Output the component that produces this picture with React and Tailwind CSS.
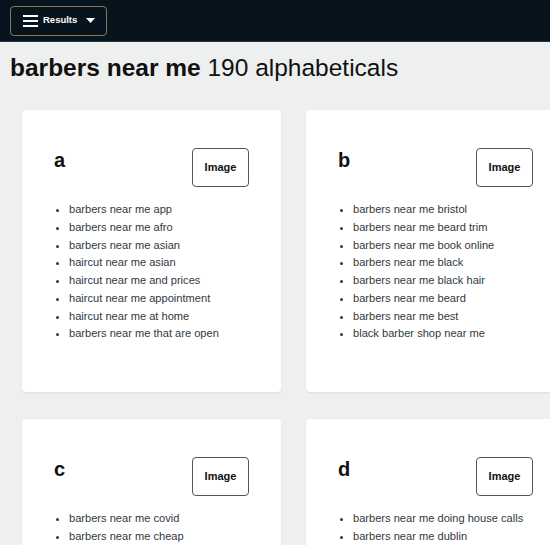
const cards = [
  {
    letter: "a",
    items: [
      "barbers near me app",
      "barbers near me afro",
      "barbers near me asian",
      "haircut near me asian",
      "haircut near me and prices",
      "haircut near me appointment",
      "haircut near me at home",
      "barbers near me that are open",
    ],
  },
  {
    letter: "b",
    items: [
      "barbers near me bristol",
      "barbers near me beard trim",
      "barbers near me book online",
      "barbers near me black",
      "barbers near me black hair",
      "barbers near me beard",
      "barbers near me best",
      "black barber shop near me",
    ],
  },
  {
    letter: "c",
    items: [
      "barbers near me covid",
      "barbers near me cheap",
      "barbers near me cardiff",
      "barbers near me curly hair",
      "barbers near me children",
      "haircut near me cheap",
      "haircut near me curly hair",
      "cheap barbers near me",
    ],
  },
  {
    letter: "d",
    items: [
      "barbers near me doing house calls",
      "barbers near me dublin",
      "barbers near me dundee",
      "barbers near me dreads",
      "haircut near me drop in",
      "haircut near me deals",
      "haircut near me discount",
      "dog barbers near me",
    ],
  },
];

function Card({ letter, items }) {
  return (
    <div className="h-[282px] w-[259px] shrink-0 rounded bg-white px-[32px] pt-[38px] shadow-[0_1px_2px_rgba(0,0,0,0.08)]">
      <div className="flex items-start justify-between">
        <h2 className="mt-[2px] text-[20px] font-bold leading-none text-[#111]">{letter}</h2>
        <button className="h-[39px] w-[57px] rounded border border-[#555] bg-white text-[11px] font-bold text-[#111]">
          Image
        </button>
      </div>
      <ul className="mt-[14px] list-disc pl-[15px] text-[11.1px] leading-[17.75px] text-[#30393f]">
        {items.map((item) => (
          <li key={item}>{item}</li>
        ))}
      </ul>
    </div>
  );
}

export default function App() {
  return (
    <div className="h-[545px] w-[550px] overflow-hidden bg-[#eeefef] font-['Liberation_Sans',Arial,sans-serif]">
      {/* top bar */}
      <header className="flex h-[42px] items-center border-b border-[#2a3640] bg-[#07141e] pl-[10px]">
        <button className="flex h-[30px] w-[97px] items-center gap-[5px] rounded border border-[#8a7657] pl-[12px] text-white">
          <svg width="15" height="12" viewBox="0 0 15 12" fill="white">
            <rect x="0" y="0" width="15" height="2" />
            <rect x="0" y="5" width="15" height="2" />
            <rect x="0" y="10" width="15" height="2" />
          </svg>
          <span className="text-[9.5px] font-bold">Results</span>
          <svg width="9" height="5" viewBox="0 0 9 5" fill="white" className="ml-[4px]">
            <path d="M0 0h9L4.5 5z" />
          </svg>
        </button>
      </header>

      <h1 className="mt-[12px] pl-[10px] text-[24.5px] leading-[28px] text-[#111]">
        <span className="font-bold">barbers near me</span> 190 alphabeticals
      </h1>

      <div className="mt-[28px] grid grid-cols-[259px_259px] gap-x-[25px] gap-y-[27px] pl-[22px]">
        {cards.map((c) => (
          <Card key={c.letter} {...c} />
        ))}
      </div>
    </div>
  );
}
